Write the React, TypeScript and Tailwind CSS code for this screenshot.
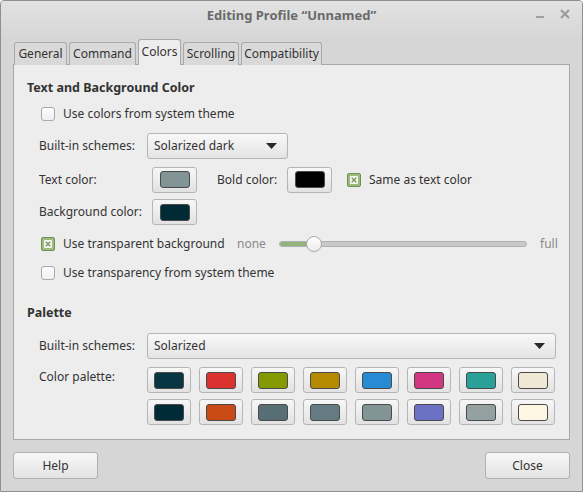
import React from "react";

const row1 = ["#073642", "#dc322f", "#859900", "#b58900", "#268bd2", "#d33682", "#2aa198", "#eee8d5"];
const row2 = ["#002b36", "#cb4b16", "#586e75", "#657b83", "#839496", "#6c71c4", "#93a1a1", "#fdf6e3"];

const tabs = [
    { label: "General", w: "w-[53px]" },
    { label: "Command", w: "w-[67px]" },
    { label: "Colors", w: "w-[43px]", active: true },
    { label: "Scrolling", w: "w-[56px]" },
    { label: "Compatibility", w: "w-[81px]" },
];

function Check({ checked }: { checked?: boolean }) {
    if (!checked) {
        return <div className="w-[14px] h-[14px] shrink-0 rounded-[3px] border border-[#a9a9a9] bg-gradient-to-b from-[#fdfdfd] to-[#f0f0f0]" />;
    }
    return (
        <div className="w-[14px] h-[14px] shrink-0 rounded-[2px] border border-[#6f8f55] bg-[#9cbc7e] flex items-center justify-center">
            <div className="w-[8px] h-[8px] bg-[#f4f4f4] rounded-[1px] flex items-center justify-center">
                <svg width="6" height="6" viewBox="0 0 6 6">
                    <path d="M0.8 0.8 L5.2 5.2 M5.2 0.8 L0.8 5.2" stroke="#7f9e63" strokeWidth="1.6" />
                </svg>
            </div>
        </div>
    );
}

function Swatch({ color, w = "w-[45px]" }: { color: string; w?: string }) {
    return (
        <div className={`${w} h-[26px] rounded-[3px] border border-[#b5b5b5] bg-gradient-to-b from-[#f7f7f7] to-[#e2e2e2] flex items-center justify-center shrink-0`}>
            <div className="w-[30px] h-[17px] rounded-[3px] border border-[#4a4a4a]" style={{ backgroundColor: color }} />
        </div>
    );
}

function Combo({ text, w }: { text: string; w: string }) {
    return (
        <div className={`${w} h-[26px] rounded-[3px] border border-[#b5b5b5] bg-gradient-to-b from-[#f8f8f8] to-[#e4e4e4] flex items-center justify-between pl-[6px] pr-[10px]`}>
            <span>{text}</span>
            <svg width="11" height="6" viewBox="0 0 11 6">
                <path d="M0 0 H11 L5.5 6 Z" fill="#2a2a2a" />
            </svg>
        </div>
    );
}

function Button({ label }: { label: string }) {
    return (
        <div className="w-[85px] h-[27px] rounded-[3px] border border-[#b0b0b0] bg-gradient-to-b from-[#f7f7f7] to-[#e3e3e3] flex items-center justify-center">
            {label}
        </div>
    );
}

export default function App() {
    return (
        <div className="w-[583px] h-[492px] bg-[#d6d6d6] border border-[#8f8f8f] rounded-t-[4px] flex flex-col text-[12px] text-[#333333] font-['Noto_Sans',sans-serif] whitespace-nowrap overflow-hidden">
            {/* title bar */}
            <div className="h-[38px] flex items-start pt-[5px] relative bg-gradient-to-b from-[#e2e2e2] to-[#d6d6d6]">
                <div className="flex-1 text-center text-[13px] font-bold text-[#6a6a6a]">Editing Profile “Unnamed”</div>
                <div className="absolute right-[12px] top-[8px] flex items-center gap-[16px]">
                    <div className="w-[8px] h-[2px] bg-[#a0a0a0] mt-[6px]" />
                    <svg width="10" height="10" viewBox="0 0 10 10">
                        <path d="M1 1 L9 9 M9 1 L1 9" stroke="#9c9c9c" strokeWidth="2.2" />
                    </svg>
                </div>
            </div>

            {/* tabs */}
            <div className="flex items-end gap-[2px] pl-[13px] h-[26px] -mb-px relative z-10">
                {tabs.map((t) =>
                    t.active ? (
                        <div key={t.label} className={`${t.w} h-[26px] bg-[#ededed] border border-b-0 border-[#a8a8a8] rounded-t-[3px] flex items-center justify-center pb-[2px]`}>
                            {t.label}
                        </div>
                    ) : (
                        <div key={t.label} className={`${t.w} h-[23px] bg-[#d9d9d9] border border-b-0 border-[#aaaaaa] rounded-t-[3px] flex items-center justify-center`}>
                            {t.label}
                        </div>
                    )
                )}
            </div>

            {/* panel */}
            <div className="mx-[12px] h-[376px] bg-[#ededed] border border-[#a8a8a8] flex flex-col pl-[13px] pt-[14px]">
                <div className="font-bold h-[18px] leading-[18px] text-[12.5px]">Text and Background Color</div>
                <div className="flex items-center gap-[8px] pl-[14px] mt-[9px] h-[16px]">
                    <Check />
                    <span>Use colors from system theme</span>
                </div>
                <div className="flex items-center pl-[12px] mt-[11px] h-[26px]">
                    <span className="w-[108px]">Built-in schemes:</span>
                    <Combo text="Solarized dark" w="w-[141px]" />
                </div>
                <div className="flex items-center pl-[12px] mt-[7px] h-[27px]">
                    <span className="w-[113px]">Text color:</span>
                    <Swatch color="#839496" />
                    <span className="ml-[20px] w-[70px]">Bold color:</span>
                    <Swatch color="#000000" />
                    <div className="ml-[15px]"><Check checked /></div>
                    <span className="ml-[8px]">Same as text color</span>
                </div>
                <div className="flex items-center pl-[12px] mt-[6px] h-[26px]">
                    <span className="w-[113px]">Background color:</span>
                    <Swatch color="#002b36" />
                </div>
                <div className="flex items-center pl-[14px] mt-[6px] h-[26px]">
                    <Check checked />
                    <span className="ml-[8px] w-[160px]">Use transparent background</span>
                    <span className="ml-[14px] w-[28px] text-[#8a8a8a]">none</span>
                    <div className="ml-[14px] w-[248px] h-[18px] relative flex items-center">
                        <div className="w-full h-[6px] rounded-full bg-[#c9c9c9] border border-[#b0b0b0] overflow-hidden">
                            <div className="w-[30px] h-full bg-[#93b57a]" />
                        </div>
                        <div className="absolute left-[27px] top-[1px] w-[16px] h-[16px] rounded-full bg-gradient-to-b from-[#ffffff] to-[#ececec] border border-[#a8a8a8]" />
                    </div>
                    <span className="ml-[13px] text-[#8a8a8a]">full</span>
                </div>
                <div className="flex items-center gap-[8px] pl-[14px] mt-[3px] h-[26px]">
                    <Check />
                    <span>Use transparency from system theme</span>
                </div>

                <div className="font-bold h-[18px] leading-[18px] text-[12.5px] mt-[18px]">Palette</div>
                <div className="flex items-center pl-[12px] mt-[11px] h-[26px]">
                    <span className="w-[108px]">Built-in schemes:</span>
                    <Combo text="Solarized" w="w-[409px]" />
                </div>
                <div className="flex items-start pl-[12px] mt-[8px]">
                    <span className="w-[108px] mt-[1px]">Color palette:</span>
                    <div className="flex flex-col gap-[6px]">
                        <div className="flex gap-[8px]">
                            {row1.map((c) => (
                                <Swatch key={c} color={c} w="w-[44px]" />
                            ))}
                        </div>
                        <div className="flex gap-[8px]">
                            {row2.map((c) => (
                                <Swatch key={c} color={c} w="w-[44px]" />
                            ))}
                        </div>
                    </div>
                </div>
            </div>

            {/* buttons */}
            <div className="flex justify-between px-[12px] mt-[12px]">
                <Button label="Help" />
                <Button label="Close" />
            </div>
        </div>
    );
}
